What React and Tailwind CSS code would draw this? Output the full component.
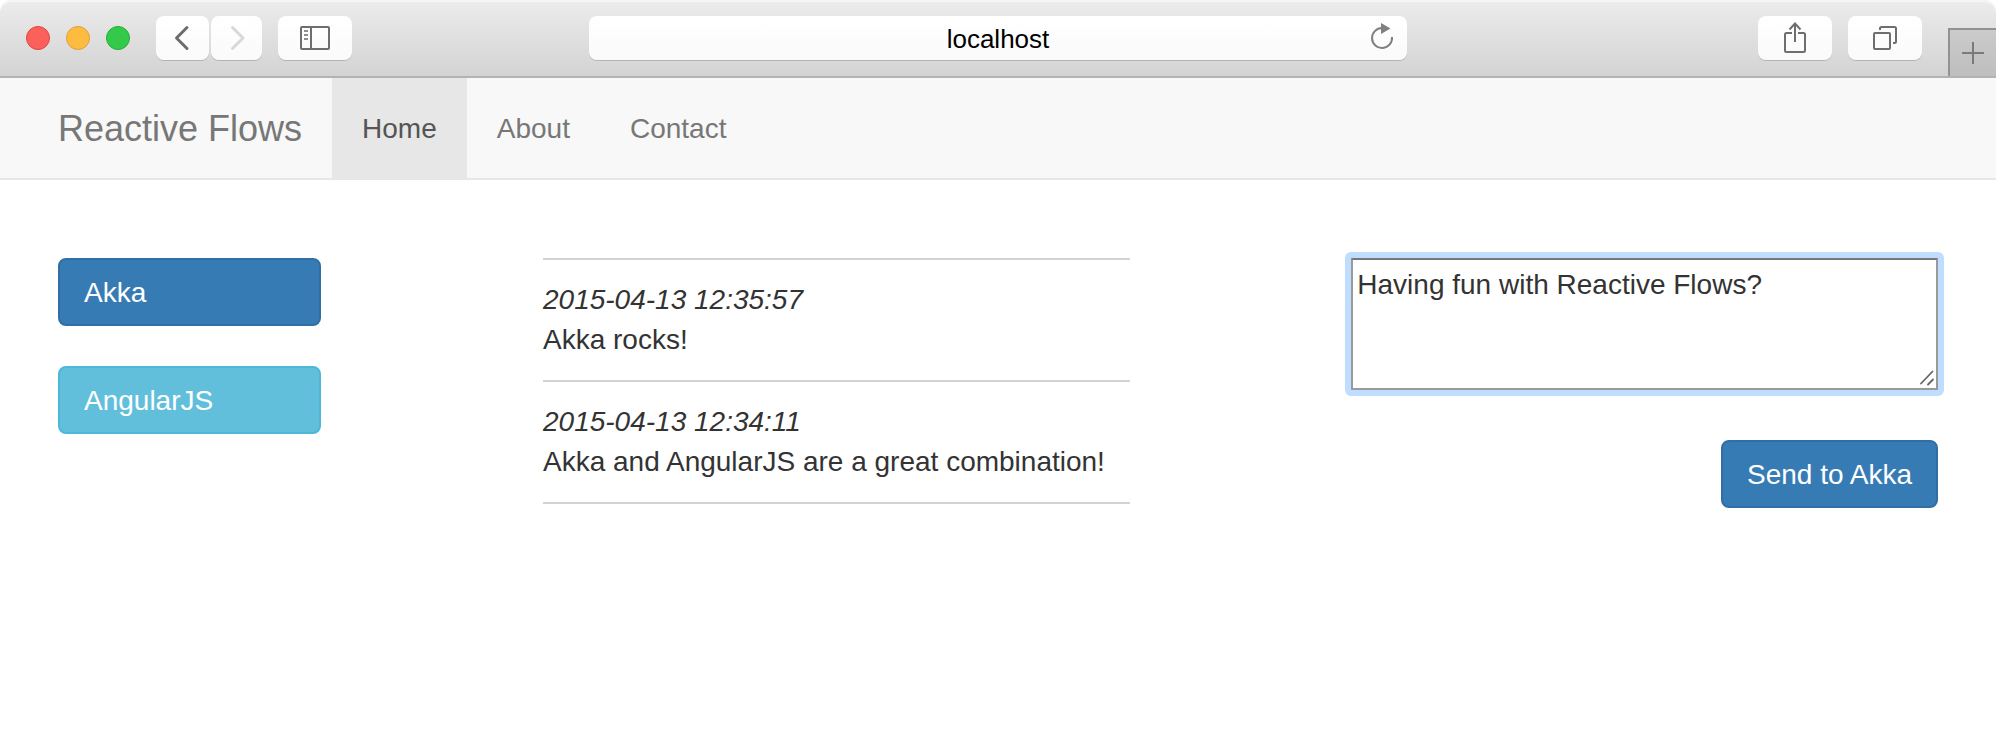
import React, { useState } from "react";

const toolButton =
  "flex h-11 items-center justify-center rounded-lg bg-linear-to-b from-white to-[#fafafa] shadow-[0_1px_0_#b4b4b4]";

function BackIcon() {
  return (
    <svg width="20" height="28" viewBox="0 0 20 28" fill="none" stroke="#6c6c6c" strokeWidth="3" strokeLinecap="round" strokeLinejoin="round" aria-hidden="true">
      <path d="M14 3.500 3.500 14 14 24.500" />
    </svg>
  );
}

function ForwardIcon() {
  return (
    <svg width="20" height="28" viewBox="0 0 20 28" fill="none" stroke="#d8d8d8" strokeWidth="3" strokeLinecap="round" strokeLinejoin="round" aria-hidden="true">
      <path d="M5.500 3.500 16 14 5.500 24.500" />
    </svg>
  );
}

function SidebarIcon() {
  return (
    <svg width="30" height="24" viewBox="0 0 30 24" fill="none" stroke="#6e6e6e" strokeWidth="2" aria-hidden="true">
      <rect x="1" y="1" width="28" height="22" rx="1" />
      <path d="M11 1v22" />
      <path d="M4 5h4M4 9h4M4 13h4" stroke="#8f8f8f" />
    </svg>
  );
}

function ReloadIcon() {
  return (
    <svg width="26" height="30" viewBox="0 0 26 30" aria-hidden="true">
      <path d="M23 15a10 10 0 1 1-10-9" fill="none" stroke="#808080" strokeWidth="2" />
      <path d="M12 1l9.500 5.500L12 12z" fill="#808080" />
    </svg>
  );
}

function ShareIcon() {
  return (
    <svg width="22" height="32" viewBox="0 0 22 32" fill="none" stroke="#6e6e6e" strokeWidth="2" aria-hidden="true">
      <path d="M8 11H2.500Q1 11 1 12.500V28.500Q1 30 2.500 30H19.500Q21 30 21 28.500V12.500Q21 11 19.500 11H14" />
      <path d="M11 1.500v18.500M5.500 7.500 11 1.500l5.500 6" />
    </svg>
  );
}

function TabsIcon() {
  return (
    <svg width="24" height="24" viewBox="0 0 24 24" fill="none" stroke="#6e6e6e" strokeWidth="2" aria-hidden="true">
      <rect x="1" y="7" width="16" height="16" rx="1" />
      <path d="M7 4V2.500Q7 1 8.500 1H21.500Q23 1 23 2.500V15.500Q23 17 21.500 17H20" />
    </svg>
  );
}

function PlusIcon() {
  return (
    <svg width="22" height="22" viewBox="0 0 22 22" stroke="#7a7a7a" strokeWidth="2" aria-hidden="true">
      <path d="M11 0v22M0 11h22" />
    </svg>
  );
}

function BrowserToolbar() {
  const [address, setAddress] = useState("localhost");
  return (
    <header className="grid h-[78px] grid-cols-[1fr_41%_1fr] overflow-hidden rounded-t-xl border-b-2 border-[#b3b3b3] bg-linear-to-b from-[#ececec] to-[#d3d3d3] shadow-[inset_0_2px_0_#f5f5f5]">
      <div className="flex items-start pl-[26px] pt-4">
        <div className="flex h-11 items-center gap-4">
          <button aria-label="Close" className="size-6 rounded-full border border-[#e0443e] bg-[#fc605b]" />
          <button aria-label="Minimize" className="size-6 rounded-full border border-[#dd9f3d] bg-[#fdbc40]" />
          <button aria-label="Zoom" className="size-6 rounded-full border border-[#27ab36] bg-[#34ca49]" />
        </div>
        <div className="ml-[26px] flex gap-0.5">
          <button aria-label="Back" className={`w-[53px] ${toolButton}`}>
            <BackIcon />
          </button>
          <button aria-label="Forward" className={`w-[51px] ${toolButton}`}>
            <ForwardIcon />
          </button>
        </div>
        <button aria-label="Show sidebar" className={`ml-4 w-[74px] ${toolButton}`}>
          <SidebarIcon />
        </button>
      </div>
      <div className="pt-4">
        <div className="relative">
          <input
            type="text"
            aria-label="Address"
            value={address}
            onChange={(e) => setAddress(e.target.value)}
            className="block h-11 w-full rounded-lg bg-linear-to-b from-white to-[#fafafa] px-12 pt-0.5 text-center text-[26px] leading-10 text-black shadow-[0_1px_0_#b4b4b4] outline-none"
          />
          <button aria-label="Reload" className="absolute right-3 top-1.5">
            <ReloadIcon />
          </button>
        </div>
      </div>
      <div className="flex items-start justify-end gap-4 pt-4">
        <button aria-label="Share" className={`w-[74px] ${toolButton}`}>
          <ShareIcon />
        </button>
        <button aria-label="Show all tabs" className={`w-[74px] ${toolButton}`}>
          <TabsIcon />
        </button>
        <button
          aria-label="New tab"
          className="ml-2.5 mt-3 flex h-12 w-12 items-center justify-center border-l-2 border-t-2 border-[#929292] bg-linear-to-b from-[#cbcbcb] to-[#bebebe]"
        >
          <PlusIcon />
        </button>
      </div>
    </header>
  );
}

function NavBar() {
  return (
    <nav className="border-b-2 border-[#e7e7e7] bg-[#f8f8f8]">
      <div className="mx-auto flex h-[100px] max-w-[1940px] items-stretch text-[#777]">
        <a href="#" className="flex items-center px-[30px] pt-0.5 text-[36px] leading-10">
          Reactive Flows
        </a>
        <a href="#home" aria-current="page" className="flex items-center bg-[#e7e7e7] px-[30px] pt-0.5 text-[#555]">
          Home
        </a>
        <a href="#about" className="flex items-center px-[30px] pt-0.5">
          About
        </a>
        <a href="#contact" className="flex items-center px-[30px] pt-0.5">
          Contact
        </a>
      </div>
    </nav>
  );
}

const messages = [
  { time: "2015-04-13 12:35:57", text: "Akka rocks!" },
  { time: "2015-04-13 12:34:11", text: "Akka and AngularJS are a great combination!" },
];

export default function App() {
  const [draft, setDraft] = useState("Having fun with Reactive Flows?");
  return (
    <div className="min-h-screen bg-white font-['Helvetica_Neue','Liberation_Sans',sans-serif] text-[28px] leading-10 text-[#333]">
      <BrowserToolbar />
      <NavBar />
      <main className="mx-auto grid max-w-[1940px] grid-cols-12 pt-[78px]">
        <div className="col-span-2 flex flex-col gap-10 px-[30px]">
          <button className="rounded-lg border-2 border-[#2f6fa6] bg-[#377bb5] px-6 pt-[13px] pb-[11px] text-left text-white">
            Akka
          </button>
          <button className="rounded-lg border-2 border-[#4db7d8] bg-[#62bfdc] px-6 pt-[13px] pb-[11px] text-left text-white">
            AngularJS
          </button>
        </div>
        <ul className="col-span-4 col-start-4 mx-[30px] self-start border-t-2 border-[#d3d3d3]">
          {messages.map((m) => (
            <li key={m.time} className="border-b-2 border-[#d3d3d3] py-5">
              <em className="block">{m.time}</em>
              <p>{m.text}</p>
            </li>
          ))}
        </ul>
        <form className="col-span-4 col-start-9 flex flex-col items-end gap-[50px] px-[30px]" onSubmit={(e) => e.preventDefault()}>
          <div className="relative w-full">
            <textarea
              aria-label="Message"
              value={draft}
              onChange={(e) => setDraft(e.target.value)}
              className="block h-[132px] w-full resize-none border-2 border-[#999] border-t-[#777] bg-white px-1 pt-[5px] pb-1 outline-none"
            />
            <div className="pointer-events-none absolute -inset-1.5 rounded-md border-6 border-[#bfdeff]" />
            <svg className="pointer-events-none absolute bottom-1 right-1" width="14" height="16" viewBox="0 0 14 16" stroke="#666" strokeWidth="1.800" strokeLinecap="round" aria-hidden="true">
              <path d="M1 13.500 12.500 1.500M8 14.500l5-5" />
            </svg>
          </div>
          <button type="submit" className="rounded-lg border-2 border-[#2f6fa6] bg-[#377bb5] px-6 pt-[13px] pb-[11px] text-white">
            Send to Akka
          </button>
        </form>
      </main>
    </div>
  );
}
